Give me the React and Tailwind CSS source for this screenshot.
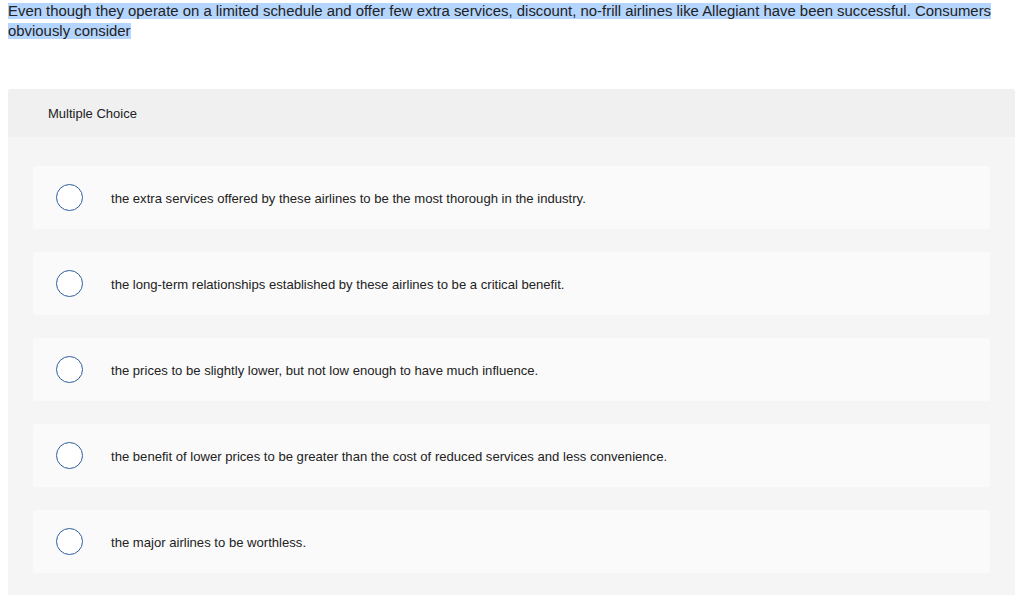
const OPTIONS = [
  'the extra services offered by these airlines to be the most thorough in the industry.',
  'the long-term relationships established by these airlines to be a critical benefit.',
  'the prices to be slightly lower, but not low enough to have much influence.',
  'the benefit of lower prices to be greater than the cost of reduced services and less convenience.',
  'the major airlines to be worthless.',
];

function Option({ text }) {
  return (
    <div className="flex items-center h-[63px] bg-[#fafafa] rounded-[3px] pl-[23px]">
      <span className="w-[27px] h-[27px] rounded-full border-[1.5px] border-[#2f5e9c] bg-white shrink-0" />
      <span className="ml-[28px] pt-[2px] text-[13.1px] text-[#222]">{text}</span>
    </div>
  );
}

export default function App() {
  return (
    <div className="w-[1024px] h-[595px] overflow-hidden bg-white font-['Liberation_Sans',sans-serif]">
      <p className="px-2 pt-[1px] text-[14.9px] leading-[20px] text-[#222]">
        <span className="bg-[#b4d5fe]">
          Even though they operate on a limited schedule and offer few extra services, discount, no-frill airlines like Allegiant have been successful. Consumers obviously consider
        </span>
      </p>
      <div className="mt-[48px] mx-2 w-[1007px] rounded-t-[3px] bg-[#f5f5f5]">
        <div className="h-[48px] flex items-center pl-10 pt-[2px] bg-[#f0f0f0] rounded-t-[3px] text-[13px] text-[#222]">
          Multiple Choice
        </div>
        <div className="px-[25px] pt-[29px] pb-[40px] flex flex-col gap-[23px]">
          {OPTIONS.map(function (o) {
            return <Option key={o} text={o} />;
          })}
        </div>
      </div>
    </div>
  );
}
